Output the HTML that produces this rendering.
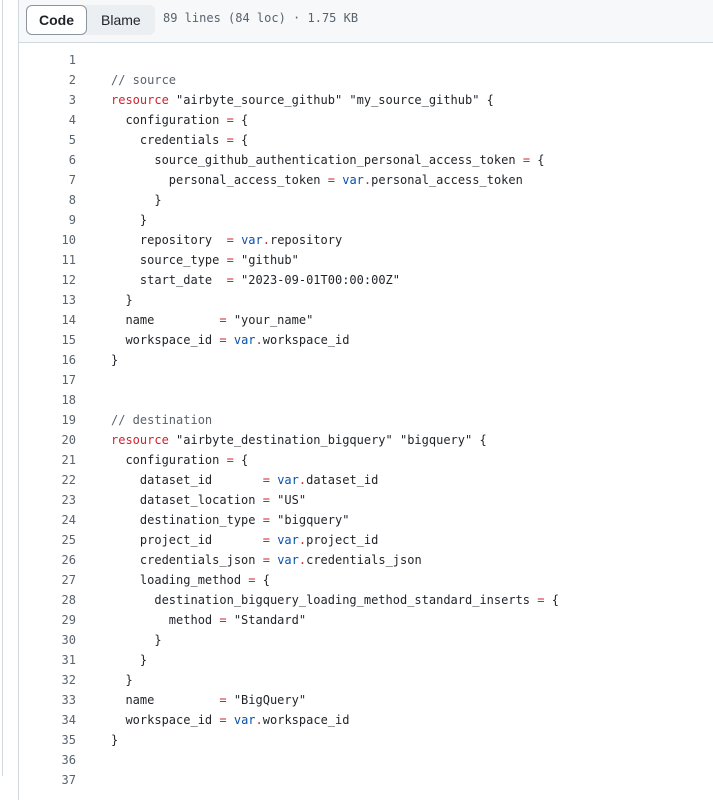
<!DOCTYPE html>
<html><head><meta charset="utf-8"><style>
body{margin:0;width:713px;height:776px;overflow:hidden;background:#fff;font-family:"Liberation Sans",sans-serif;position:relative}
.lb{position:absolute;left:2px;top:0;width:1px;height:776px;background:#d1d9e0}
.box{position:absolute;left:18px;top:0;width:720px;height:800px;border-left:1px solid #d1d9e0}
.hdr{position:absolute;left:0;top:0;right:0;height:42px;background:#f6f8fa;border-bottom:1px solid #d1d9e0}
.seg{position:absolute;left:7px;top:5px;width:129px;height:30px;background:#eceff2;border-radius:6px}
.code{position:absolute;left:0;top:0;width:61px;height:30px;box-sizing:border-box;border:1px solid #8c959f;border-radius:6px;background:#fff;font-weight:bold;font-size:14px;text-align:center;line-height:28px;color:#1f2328}
.blame{position:absolute;left:75px;top:0;line-height:30px;font-size:14px;color:#1f2328}
.info{position:absolute;left:144px;top:11px;font:12px "DejaVu Sans Mono",monospace;color:#59636e}
pre{margin:0;position:absolute;top:50px;left:0;font:12px/20px "DejaVu Sans Mono",monospace;color:#1f2328}
.n{display:inline-block;width:57px;text-align:right;color:#59636e;margin-right:35px}
.k{color:#cf222e}.v{color:#0550ae}.c{color:#59636e}
</style></head><body>
<div class="lb"></div>
<div class="box">
<div class="hdr"><div class="seg"><div class="code">Code</div><div class="blame">Blame</div></div>
<div class="info">89 lines (84 loc) · 1.75 KB</div></div>
<pre><span class="n">1</span>
<span class="n">2</span><span class="c">// source</span>
<span class="n">3</span><span class="k">resource</span> "airbyte_source_github" "my_source_github" {
<span class="n">4</span>  configuration <span class="k">=</span> {
<span class="n">5</span>    credentials <span class="k">=</span> {
<span class="n">6</span>      source_github_authentication_personal_access_token <span class="k">=</span> {
<span class="n">7</span>        personal_access_token <span class="k">=</span> <span class="v">var</span><span class="k">.</span>personal_access_token
<span class="n">8</span>      }
<span class="n">9</span>    }
<span class="n">10</span>    repository  <span class="k">=</span> <span class="v">var</span><span class="k">.</span>repository
<span class="n">11</span>    source_type <span class="k">=</span> "github"
<span class="n">12</span>    start_date  <span class="k">=</span> "2023-09-01T00:00:00Z"
<span class="n">13</span>  }
<span class="n">14</span>  name         <span class="k">=</span> "your_name"
<span class="n">15</span>  workspace_id <span class="k">=</span> <span class="v">var</span><span class="k">.</span>workspace_id
<span class="n">16</span>}
<span class="n">17</span>
<span class="n">18</span>
<span class="n">19</span><span class="c">// destination</span>
<span class="n">20</span><span class="k">resource</span> "airbyte_destination_bigquery" "bigquery" {
<span class="n">21</span>  configuration <span class="k">=</span> {
<span class="n">22</span>    dataset_id       <span class="k">=</span> <span class="v">var</span><span class="k">.</span>dataset_id
<span class="n">23</span>    dataset_location <span class="k">=</span> "US"
<span class="n">24</span>    destination_type <span class="k">=</span> "bigquery"
<span class="n">25</span>    project_id       <span class="k">=</span> <span class="v">var</span><span class="k">.</span>project_id
<span class="n">26</span>    credentials_json <span class="k">=</span> <span class="v">var</span><span class="k">.</span>credentials_json
<span class="n">27</span>    loading_method <span class="k">=</span> {
<span class="n">28</span>      destination_bigquery_loading_method_standard_inserts <span class="k">=</span> {
<span class="n">29</span>        method <span class="k">=</span> "Standard"
<span class="n">30</span>      }
<span class="n">31</span>    }
<span class="n">32</span>  }
<span class="n">33</span>  name         <span class="k">=</span> "BigQuery"
<span class="n">34</span>  workspace_id <span class="k">=</span> <span class="v">var</span><span class="k">.</span>workspace_id
<span class="n">35</span>}
<span class="n">36</span>
<span class="n">37</span>
</pre>
</div>
</body></html>
